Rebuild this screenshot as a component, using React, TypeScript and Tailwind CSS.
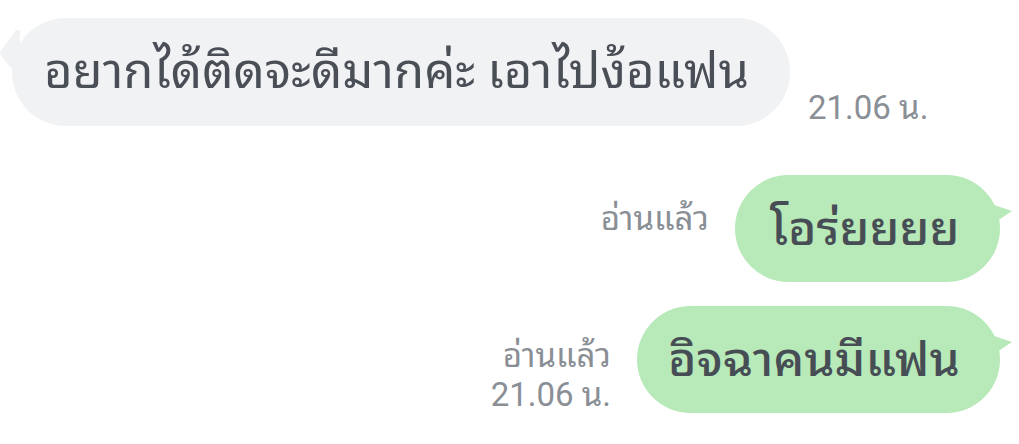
import React from "react";

const thai = "font-['Roboto','Noto_Sans_Thai_Looped',sans-serif]";

function TailLeft() {
  return (
    <svg className="absolute left-[-12px] top-[12px]" width="20" height="40" viewBox="0 0 20 40">
      <path d="M20 0 L16 0 L0 22 L0 24 L10 37 L20 40 Z" fill="#f1f2f4" />
    </svg>
  );
}

function TailRight() {
  return (
    <svg className="absolute right-[-14px] top-[28px]" width="24" height="22" viewBox="0 0 24 22">
      <path d="M0 0 L4 2 L22 8 L4 20 L0 22 Z" fill="#b8e9b8" />
    </svg>
  );
}

function Meta({ read, time }: { read?: boolean; time?: boolean }) {
  return (
    <div className={`flex flex-col items-end text-[33px] leading-[39px] text-[#8a8f96] ${thai}`}>
      {read && <span>อ่านแล้ว</span>}
      {time && <span>21.06 น.</span>}
    </div>
  );
}

export default function App() {
  return (
    <div className="w-[1019px] h-[444px] bg-white overflow-hidden">
      <div className="flex items-end gap-[18px] pt-[18px] pl-[12px]">
        <div className="relative bg-[#f1f2f4] rounded-[54px] h-[108px] w-[778px] flex items-center pl-[32px]">
          <TailLeft />
          <span className={`text-[49px] text-[#4a4f57] whitespace-nowrap ${thai}`}>
            อยากได้ติดจะดีมากค่ะ เอาไปง้อแฟน
          </span>
        </div>
        <div className="-mb-[1px]">
          <Meta time />
        </div>
      </div>

      <div className="flex justify-end items-start gap-[26px] pr-[19px] mt-[49px]">
        <div className="mt-[24px]">
          <Meta read />
        </div>
        <div className="relative bg-[#b8e9b8] rounded-[54px] h-[107px] w-[265px] flex items-center pl-[35px]">
          <TailRight />
          <span className={`text-[48px] font-medium text-[#474d55] whitespace-nowrap ${thai}`}>
            โอร่ยยยย
          </span>
        </div>
      </div>

      <div className="flex justify-end items-end gap-[26px] pr-[19px] mt-[24px]">
        <div className="-mb-[1px]">
          <Meta read time />
        </div>
        <div className="relative bg-[#b8e9b8] rounded-[54px] h-[107px] w-[363px] flex items-center pl-[31px]">
          <TailRight />
          <span className={`text-[48px] font-medium text-[#474d55] whitespace-nowrap ${thai}`}>
            อิจฉาคนมีแฟน
          </span>
        </div>
      </div>
    </div>
  );
}
